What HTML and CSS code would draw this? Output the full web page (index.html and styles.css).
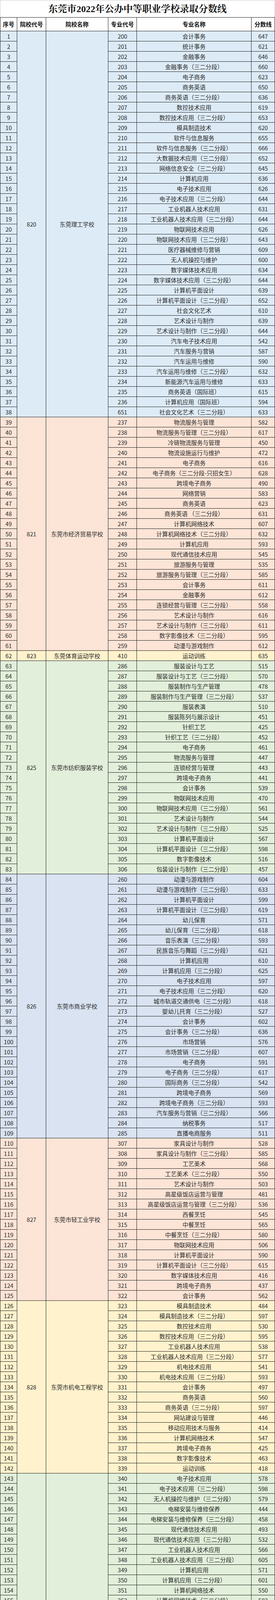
FILE: index.html
```html
<!DOCTYPE html>
<html lang="zh-CN">
<head>
<meta charset="utf-8">
<meta name="viewport" content="width=device-width, initial-scale=1">
<title>东莞市2022年公办中等职业学校录取分数线</title>
<link rel="stylesheet" href="styles.css">
</head>
<body>
<div class="sheet">
<div class="title">东莞市2022年公办中等职业学校录取分数线</div>
<table class="scores">
<colgroup><col class="c-no"><col class="c-code"><col class="c-school"><col class="c-mcode"><col class="c-major"><col class="c-score"></colgroup>
<thead><tr><th>序号</th><th>院校代号</th><th>院校名称</th><th>专业代号</th><th>专业名称</th><th>分数线</th></tr></thead>
<tbody class="g-blue">
<tr><td>1</td><td rowspan="38">820</td><td rowspan="38">东莞理工学校</td><td>200</td><td>会计事务</td><td>647</td></tr>
<tr><td>2</td><td>201</td><td>统计事务</td><td>621</td></tr>
<tr><td>3</td><td>202</td><td>金融事务</td><td>646</td></tr>
<tr><td>4</td><td>203</td><td>金融事务（三二分段）</td><td>660</td></tr>
<tr><td>5</td><td>204</td><td>电子商务</td><td>623</td></tr>
<tr><td>6</td><td>205</td><td>商务英语</td><td>650</td></tr>
<tr><td>7</td><td>206</td><td>商务英语（三二分段）</td><td>636</td></tr>
<tr><td>8</td><td>207</td><td>数控技术应用</td><td>619</td></tr>
<tr><td>9</td><td>208</td><td>数控技术应用（三二分段）</td><td>653</td></tr>
<tr><td>10</td><td>209</td><td>模具制造技术</td><td>620</td></tr>
<tr><td>11</td><td>210</td><td>软件与信息服务</td><td>655</td></tr>
<tr><td>12</td><td>211</td><td>软件与信息服务（三二分段）</td><td>666</td></tr>
<tr><td>13</td><td>212</td><td>大数据技术应用（三二分段）</td><td>652</td></tr>
<tr><td>14</td><td>213</td><td>网络信息安全（三二分段）</td><td>645</td></tr>
<tr><td>15</td><td>214</td><td>计算机应用</td><td>636</td></tr>
<tr><td>16</td><td>215</td><td>电子技术应用</td><td>626</td></tr>
<tr><td>17</td><td>216</td><td>电子技术应用（三二分段）</td><td>644</td></tr>
<tr><td>18</td><td>217</td><td>工业机器人技术应用</td><td>631</td></tr>
<tr><td>19</td><td>218</td><td>工业机器人技术应用（三二分段）</td><td>644</td></tr>
<tr><td>20</td><td>219</td><td>物联网技术应用</td><td>626</td></tr>
<tr><td>21</td><td>220</td><td>物联网技术应用（三二分段）</td><td>643</td></tr>
<tr><td>22</td><td>221</td><td>医疗器械维修与营销</td><td>609</td></tr>
<tr><td>23</td><td>222</td><td>无人机操控与维护</td><td>600</td></tr>
<tr><td>24</td><td>223</td><td>数字媒体技术应用</td><td>634</td></tr>
<tr><td>25</td><td>224</td><td>数字媒体技术应用（三二分段）</td><td>644</td></tr>
<tr><td>26</td><td>225</td><td>计算机平面设计</td><td>639</td></tr>
<tr><td>27</td><td>226</td><td>计算机平面设计（三二分段）</td><td>652</td></tr>
<tr><td>28</td><td>227</td><td>社会文化艺术</td><td>610</td></tr>
<tr><td>29</td><td>228</td><td>艺术设计与制作</td><td>639</td></tr>
<tr><td>30</td><td>229</td><td>艺术设计与制作（三二分段）</td><td>644</td></tr>
<tr><td>31</td><td>230</td><td>汽车电子技术应用</td><td>542</td></tr>
<tr><td>32</td><td>231</td><td>汽车服务与营销</td><td>587</td></tr>
<tr><td>33</td><td>232</td><td>汽车运用与维修</td><td>590</td></tr>
<tr><td>34</td><td>233</td><td>汽车运用与维修（三二分段）</td><td>632</td></tr>
<tr><td>35</td><td>234</td><td>新能源汽车运用与维修</td><td>633</td></tr>
<tr><td>36</td><td>235</td><td>商务英语（国际班）</td><td>615</td></tr>
<tr><td>37</td><td>236</td><td>计算机应用（国际班）</td><td>594</td></tr>
<tr><td>38</td><td>651</td><td>社会文化艺术（三二分段）</td><td>633</td></tr>
</tbody>
<tbody class="g-peach">
<tr><td>39</td><td rowspan="23">821</td><td rowspan="23">东莞市经济贸易学校</td><td>237</td><td>物流服务与管理</td><td>582</td></tr>
<tr><td>40</td><td>238</td><td>物流服务与管理（三二分段）</td><td>617</td></tr>
<tr><td>41</td><td>239</td><td>冷链物流服务与管理</td><td>450</td></tr>
<tr><td>42</td><td>240</td><td>物流设施运行与维护</td><td>472</td></tr>
<tr><td>43</td><td>241</td><td>电子商务</td><td>616</td></tr>
<tr><td>44</td><td>242</td><td>电子商务（三二分段-只招女生）</td><td>628</td></tr>
<tr><td>45</td><td>243</td><td>跨境电子商务</td><td>490</td></tr>
<tr><td>46</td><td>244</td><td>网络营销</td><td>583</td></tr>
<tr><td>47</td><td>245</td><td>商务英语</td><td>623</td></tr>
<tr><td>48</td><td>246</td><td>商务英语 （三二分段）</td><td>631</td></tr>
<tr><td>49</td><td>247</td><td>计算机网络技术</td><td>607</td></tr>
<tr><td>50</td><td>248</td><td>计算机网络技术（三二分段）</td><td>632</td></tr>
<tr><td>51</td><td>249</td><td>计算机应用</td><td>593</td></tr>
<tr><td>52</td><td>250</td><td>现代通信技术应用</td><td>545</td></tr>
<tr><td>53</td><td>251</td><td>旅游服务与管理</td><td>535</td></tr>
<tr><td>54</td><td>252</td><td>旅游服务与管理（三二分段）</td><td>585</td></tr>
<tr><td>55</td><td>253</td><td>会计事务</td><td>611</td></tr>
<tr><td>56</td><td>254</td><td>金融事务</td><td>612</td></tr>
<tr><td>57</td><td>255</td><td>连锁经营与管理（三二分段）</td><td>558</td></tr>
<tr><td>58</td><td>256</td><td>艺术设计与制作</td><td>616</td></tr>
<tr><td>59</td><td>257</td><td>艺术设计与制作（三二分段）</td><td>611</td></tr>
<tr><td>60</td><td>258</td><td>数字影像技术（三二分段）</td><td>595</td></tr>
<tr><td>61</td><td>259</td><td>动漫与游戏制作</td><td>612</td></tr>
</tbody>
<tbody class="g-yellow">
<tr><td>62</td><td>823</td><td>东莞体育运动学校</td><td>410</td><td>运动训练</td><td>635</td></tr>
</tbody>
<tbody class="g-green">
<tr><td>63</td><td rowspan="21">825</td><td rowspan="21">东莞市纺织服装学校</td><td>286</td><td>服装设计与工艺</td><td>515</td></tr>
<tr><td>64</td><td>287</td><td>服装设计与工艺（三二分段）</td><td>570</td></tr>
<tr><td>65</td><td>288</td><td>服装制作与生产管理</td><td>478</td></tr>
<tr><td>66</td><td>289</td><td>服装制作与生产管理（三二分段）</td><td>537</td></tr>
<tr><td>67</td><td>290</td><td>服装表演</td><td>510</td></tr>
<tr><td>68</td><td>291</td><td>服装陈列与展示设计</td><td>451</td></tr>
<tr><td>69</td><td>292</td><td>针织工艺</td><td>425</td></tr>
<tr><td>70</td><td>293</td><td>针织工艺（三二分段）</td><td>452</td></tr>
<tr><td>71</td><td>294</td><td>电子商务</td><td>461</td></tr>
<tr><td>72</td><td>295</td><td>物流服务与管理</td><td>447</td></tr>
<tr><td>73</td><td>296</td><td>连锁经营与管理</td><td>443</td></tr>
<tr><td>74</td><td>297</td><td>跨境电子商务</td><td>441</td></tr>
<tr><td>75</td><td>298</td><td>会计事务</td><td>539</td></tr>
<tr><td>76</td><td>299</td><td>物联网技术应用</td><td>470</td></tr>
<tr><td>77</td><td>300</td><td>物联网技术应用（三二分段）</td><td>561</td></tr>
<tr><td>78</td><td>301</td><td>艺术设计与制作</td><td>544</td></tr>
<tr><td>79</td><td>302</td><td>艺术设计与制作（三二分段）</td><td>525</td></tr>
<tr><td>80</td><td>303</td><td>计算机平面设计</td><td>567</td></tr>
<tr><td>81</td><td>304</td><td>计算机平面设计（三二分段）</td><td>598</td></tr>
<tr><td>82</td><td>305</td><td>数字影像技术</td><td>516</td></tr>
<tr><td>83</td><td>306</td><td>包装设计与制作（三二分段）</td><td>457</td></tr>
</tbody>
<tbody class="g-lavender">
<tr><td>84</td><td rowspan="26">826</td><td rowspan="26">东莞市商业学校</td><td>260</td><td>动漫与游戏制作</td><td>604</td></tr>
<tr><td>85</td><td>261</td><td>动漫与游戏制作（三二分段）</td><td>633</td></tr>
<tr><td>86</td><td>262</td><td>计算机平面设计</td><td>599</td></tr>
<tr><td>87</td><td>263</td><td>计算机平面设计（三二分段）</td><td>619</td></tr>
<tr><td>88</td><td>264</td><td>幼儿保育</td><td>571</td></tr>
<tr><td>89</td><td>265</td><td>幼儿保育（三二分段）</td><td>618</td></tr>
<tr><td>90</td><td>266</td><td>音乐表演（三二分段）</td><td>593</td></tr>
<tr><td>91</td><td>267</td><td>民族音乐与舞蹈（三二分段）</td><td>621</td></tr>
<tr><td>92</td><td>268</td><td>计算机应用</td><td>610</td></tr>
<tr><td>93</td><td>269</td><td>计算机应用（三二分段）</td><td>625</td></tr>
<tr><td>94</td><td>270</td><td>电子技术应用</td><td>597</td></tr>
<tr><td>95</td><td>271</td><td>电子技术应用（三二分段）</td><td>620</td></tr>
<tr><td>96</td><td>272</td><td>城市轨道交通供电（三二分段）</td><td>618</td></tr>
<tr><td>97</td><td>273</td><td>婴幼儿托育（三二分段）</td><td>527</td></tr>
<tr><td>98</td><td>274</td><td>会计事务</td><td>602</td></tr>
<tr><td>99</td><td>275</td><td>会计事务（三二分段）</td><td>636</td></tr>
<tr><td>100</td><td>276</td><td>市场营销</td><td>576</td></tr>
<tr><td>101</td><td>277</td><td>市场营销（三二分段）</td><td>607</td></tr>
<tr><td>102</td><td>278</td><td>电子商务</td><td>591</td></tr>
<tr><td>103</td><td>279</td><td>电子商务（三二分段）</td><td>617</td></tr>
<tr><td>104</td><td>280</td><td>国际商务（三二分段）</td><td>542</td></tr>
<tr><td>105</td><td>281</td><td>跨境电子商务</td><td>569</td></tr>
<tr><td>106</td><td>282</td><td>跨境电子商务（三二分段）</td><td>593</td></tr>
<tr><td>107</td><td>283</td><td>汽车服务与营销（三二分段）</td><td>566</td></tr>
<tr><td>108</td><td>284</td><td>纳税事务</td><td>517</td></tr>
<tr><td>109</td><td>285</td><td>直播电商服务</td><td>511</td></tr>
</tbody>
<tbody class="g-peach">
<tr><td>110</td><td rowspan="16">827</td><td rowspan="16">东莞市轻工业学校</td><td>307</td><td>家具设计与制作</td><td>528</td></tr>
<tr><td>111</td><td>308</td><td>家具设计与制作（三二分段）</td><td>585</td></tr>
<tr><td>112</td><td>309</td><td>工艺美术</td><td>568</td></tr>
<tr><td>113</td><td>310</td><td>工艺美术（三二分段）</td><td>550</td></tr>
<tr><td>114</td><td>311</td><td>艺术设计与制作</td><td>503</td></tr>
<tr><td>115</td><td>312</td><td>高星级饭店运营与管理</td><td>481</td></tr>
<tr><td>116</td><td>313</td><td>高星级饭店运营与管理（三二分段）</td><td>536</td></tr>
<tr><td>117</td><td>314</td><td>西餐烹饪</td><td>545</td></tr>
<tr><td>118</td><td>315</td><td>中餐烹饪</td><td>565</td></tr>
<tr><td>119</td><td>316</td><td>中餐烹饪（三二分段）</td><td>580</td></tr>
<tr><td>120</td><td>317</td><td>物联网技术应用</td><td>506</td></tr>
<tr><td>121</td><td>318</td><td>计算机平面设计</td><td>590</td></tr>
<tr><td>122</td><td>319</td><td>计算机平面设计（三二分段）</td><td>615</td></tr>
<tr><td>123</td><td>320</td><td>数字媒体技术应用</td><td>416</td></tr>
<tr><td>124</td><td>321</td><td>跨境电子商务</td><td>437</td></tr>
<tr><td>125</td><td>322</td><td>会计事务</td><td>562</td></tr>
</tbody>
<tbody class="g-yellow">
<tr><td>126</td><td rowspan="17">828</td><td rowspan="17">东莞市机电工程学校</td><td>323</td><td>模具制造技术</td><td>484</td></tr>
<tr><td>127</td><td>324</td><td>模具制造技术（三二分段）</td><td>597</td></tr>
<tr><td>128</td><td>325</td><td>数控技术应用</td><td>530</td></tr>
<tr><td>129</td><td>326</td><td>数控技术应用（三二分段）</td><td>595</td></tr>
<tr><td>130</td><td>327</td><td>工业机器人技术应用</td><td>538</td></tr>
<tr><td>131</td><td>328</td><td>工业机器人技术应用（三二分段）</td><td>577</td></tr>
<tr><td>132</td><td>329</td><td>机电技术应用</td><td>541</td></tr>
<tr><td>133</td><td>330</td><td>机电技术应用（三二分段）</td><td>593</td></tr>
<tr><td>134</td><td>331</td><td>会计事务</td><td>497</td></tr>
<tr><td>135</td><td>332</td><td>商务英语</td><td>560</td></tr>
<tr><td>136</td><td>333</td><td>商务英语（三二分段）</td><td>597</td></tr>
<tr><td>137</td><td>334</td><td>网站建设与管理</td><td>446</td></tr>
<tr><td>138</td><td>335</td><td>移动应用技术与服务</td><td>414</td></tr>
<tr><td>139</td><td>336</td><td>计算机网络技术</td><td>547</td></tr>
<tr><td>140</td><td>337</td><td>跨境电子商务</td><td>425</td></tr>
<tr><td>141</td><td>338</td><td>数字影像技术</td><td>463</td></tr>
<tr><td>142</td><td>339</td><td>运动训练</td><td>418</td></tr>
</tbody>
<tbody class="g-green">
<tr><td>143</td><td rowspan="29">829</td><td rowspan="29">东莞市电子科技学校</td><td>340</td><td>电子技术应用</td><td>578</td></tr>
<tr><td>144</td><td>341</td><td>电子技术应用（三二分段）</td><td>598</td></tr>
<tr><td>145</td><td>342</td><td>无人机操控与维护（三二分段）</td><td>579</td></tr>
<tr><td>146</td><td>343</td><td>电梯安装与维修保养</td><td>444</td></tr>
<tr><td>147</td><td>344</td><td>电梯安装与维修保养（三二分段）</td><td>458</td></tr>
<tr><td>148</td><td>345</td><td>现代通信技术应用</td><td>493</td></tr>
<tr><td>149</td><td>346</td><td>现代通信技术应用（三二分段）</td><td>532</td></tr>
<tr><td>150</td><td>347</td><td>工业机器人技术应用</td><td>566</td></tr>
<tr><td>151</td><td>348</td><td>工业机器人技术应用（三二分段）</td><td>605</td></tr>
<tr><td>152</td><td>349</td><td>计算机应用</td><td>571</td></tr>
<tr><td>153</td><td>350</td><td>计算机应用（三二分段）</td><td>601</td></tr>
<tr><td>154</td><td>351</td><td>计算机网络技术</td><td>550</td></tr>
<tr><td>155</td><td>352</td><td>计算机网络技术（三二分段）</td><td>582</td></tr>
<tr><td>156</td><td>353</td><td>软件与信息服务（三二分段）</td><td>544</td></tr>
<tr><td>157</td><td>354</td><td>电子商务</td><td>529</td></tr>
<tr><td>158</td><td>355</td><td>电子商务（三二分段）</td><td>545</td></tr>
<tr><td>159</td><td>356</td><td>会计事务</td><td>546</td></tr>
<tr><td>160</td><td>357</td><td>会计事务（三二分段）</td><td>604</td></tr>
<tr><td>161</td><td>358</td><td>会计事务（三二分段）</td><td>534</td></tr>
<tr><td>162</td><td>359</td><td>纳税事务</td><td>455</td></tr>
<tr><td>163</td><td>360</td><td>纳税事务（三二分段）</td><td>429</td></tr>
<tr><td>164</td><td>361</td><td>动漫与游戏制作</td><td>604</td></tr>
<tr><td>165</td><td>362</td><td>动漫与游戏制作（三二分段）</td><td>620</td></tr>
<tr><td>166</td><td>363</td><td>数字媒体技术应用</td><td>569</td></tr>
<tr><td>167</td><td>364</td><td>数字媒体技术应用术（三二分段）</td><td>528</td></tr>
<tr><td>168</td><td>365</td><td>社会文化艺术</td><td>537</td></tr>
<tr><td>169</td><td>366</td><td>社会文化艺术（三二分段）</td><td>554</td></tr>
<tr><td>170</td><td>367</td><td>运动训练（三二分段）</td><td>559</td></tr>
<tr><td>171</td><td>368</td><td>计算机应用(出国留学班)</td><td>499</td></tr>
</tbody>
<tbody class="g-blue">
<tr><td>172</td><td rowspan="13">830</td><td rowspan="13">东莞市电子商贸学校</td><td>369</td><td>电子商务</td><td>537</td></tr>
<tr><td>173</td><td>370</td><td>电子商务（三二分段）</td><td>600</td></tr>
<tr><td>174</td><td>371</td><td>移动商务</td><td>434</td></tr>
<tr><td>175</td><td>372</td><td>物流服务与管理</td><td>438</td></tr>
<tr><td>176</td><td>373</td><td>跨境电子商务</td><td>450</td></tr>
<tr><td>177</td><td>374</td><td>数字媒体技术应用</td><td>540</td></tr>
<tr><td>178</td><td>375</td><td>现代通信技术应用</td><td>417</td></tr>
<tr><td>179</td><td>376</td><td>会计事务</td><td>518</td></tr>
<tr><td>180</td><td>377</td><td>机械加工技术</td><td>452</td></tr>
<tr><td>181</td><td>378</td><td>工业机器人技术应用</td><td>495</td></tr>
<tr><td>182</td><td>379</td><td>汽车运用与维修</td><td>442</td></tr>
<tr><td>183</td><td>380</td><td>汽车运用与维修（三二分段）</td><td>545</td></tr>
<tr><td>184</td><td>381</td><td>新能源汽车运用与维修</td><td>461</td></tr>
</tbody>
<tbody class="g-peach">
<tr><td>185</td><td rowspan="17">833</td><td rowspan="17">东莞市信息技术学校</td><td>382</td><td>电子信息技术</td><td>470</td></tr>
<tr><td>186</td><td>383</td><td>电气设备运行与控制</td><td>420</td></tr>
<tr><td>187</td><td>384</td><td>汽车电子技术应用</td><td>460</td></tr>
<tr><td>188</td><td>385</td><td>工业机器人技术应用</td><td>501</td></tr>
<tr><td>189</td><td>386</td><td>工业机器人技术应用（三二分段）</td><td>509</td></tr>
<tr><td>190</td><td>387</td><td>电梯安装与维修保养</td><td>414</td></tr>
<tr><td>191</td><td>388</td><td>计算机应用</td><td>553</td></tr>
<tr><td>192</td><td>389</td><td>计算机应用（三二分段）</td><td>595</td></tr>
<tr><td>193</td><td>390</td><td>计算机平面设计</td><td>539</td></tr>
<tr><td>194</td><td>391</td><td>计算机平面设计（三二分段）</td><td>594</td></tr>
<tr><td>195</td><td>392</td><td>计算机网络技术</td><td>466</td></tr>
<tr><td>196</td><td>393</td><td>物联网技术应用</td><td>405</td></tr>
<tr><td>197</td><td>394</td><td>工艺美术</td><td>477</td></tr>
<tr><td>198</td><td>395</td><td>电子商务</td><td>472</td></tr>
<tr><td>199</td><td>396</td><td>电子商务（三二分段）</td><td>444</td></tr>
<tr><td>200</td><td>397</td><td>会计事务</td><td>489</td></tr>
<tr><td>201</td><td>398</td><td>物流服务与管理</td><td>401</td></tr>
</tbody>
<tbody class="g-yellow">
<tr><td>202</td><td rowspan="11">835</td><td rowspan="11">东莞市汽车技术学校</td><td>399</td><td>汽车美容与装潢</td><td>409</td></tr>
<tr><td>203</td><td>400</td><td>汽车车身修复（三二分段）</td><td>450</td></tr>
<tr><td>204</td><td>401</td><td>汽车车身修复</td><td>431</td></tr>
<tr><td>205</td><td>402</td><td>新能源汽车制造与检测</td><td>417</td></tr>
<tr><td>206</td><td>403</td><td>汽车服务与营销（三二分段）</td><td>400</td></tr>
<tr><td>207</td><td>404</td><td>汽车服务与营销</td><td>427</td></tr>
<tr><td>208</td><td>405</td><td>连锁经营与管理</td><td>455</td></tr>
<tr><td>209</td><td>406</td><td>汽车运用与维修</td><td>403</td></tr>
<tr><td>210</td><td>407</td><td>汽车电子技术应用</td><td>409</td></tr>
<tr><td>211</td><td>408</td><td>新能源汽车运用与维修</td><td>461</td></tr>
<tr><td>212</td><td>409</td><td>工业机器人技术应用</td><td>413</td></tr>
</tbody>
<tbody class="g-green">
<tr><td>213</td><td rowspan="29">840</td><td rowspan="29">东莞市技师学院</td><td>550</td><td>工业设计（中德合作班）</td><td>486</td></tr>
<tr><td>214</td><td>551</td><td>模具设计与制造（中德合作班）</td><td>506</td></tr>
<tr><td>215</td><td>552</td><td>数控加工（数控铣工）（中德合作班）</td><td>485</td></tr>
<tr><td>216</td><td>553</td><td>汽车检测与维修（中德合作班）</td><td>447</td></tr>
<tr><td>217</td><td>554</td><td>无人机应用技术</td><td>550</td></tr>
<tr><td>218</td><td>555</td><td>汽车技术服务与营销</td><td>412</td></tr>
<tr><td>219</td><td>556</td><td>健康服务与管理</td><td>510</td></tr>
<tr><td>220</td><td>557</td><td>广式面点</td><td>546</td></tr>
<tr><td>221</td><td>558</td><td>家政服务与管理</td><td>417</td></tr>
<tr><td>222</td><td>559</td><td>食品加工与检验</td><td>408</td></tr>
<tr><td>223</td><td>560</td><td>粤菜烹饪</td><td>452</td></tr>
<tr><td>224</td><td>561</td><td>国际贸易</td><td>494</td></tr>
<tr><td>225</td><td>562</td><td>服装设计与制作</td><td>522</td></tr>
<tr><td>226</td><td>563</td><td>服装设计与品牌策划</td><td>467</td></tr>
<tr><td>227</td><td>564</td><td>现代物流</td><td>424</td></tr>
<tr><td>228</td><td>565</td><td>行政管理</td><td>515</td></tr>
<tr><td>229</td><td>566</td><td>市场营销</td><td>516</td></tr>
<tr><td>230</td><td>567</td><td>饭店（酒店）服务</td><td>404</td></tr>
<tr><td>231</td><td>568</td><td>导游</td><td>462</td></tr>
<tr><td>232</td><td>569</td><td>会计</td><td>551</td></tr>
<tr><td>233</td><td>570</td><td>机电一体化技术</td><td>573</td></tr>
<tr><td>234</td><td>571</td><td>计算机广告制作</td><td>514</td></tr>
<tr><td>235</td><td>572</td><td>模具设计与制造</td><td>456</td></tr>
<tr><td>236</td><td>573</td><td>烹饪（中式烹调）</td><td>519</td></tr>
<tr><td>237</td><td>574</td><td>汽车检测与维修</td><td>473</td></tr>
<tr><td>238</td><td>575</td><td>室内设计</td><td>586</td></tr>
<tr><td>239</td><td>576</td><td>数控加工（数控铣工）</td><td>467</td></tr>
<tr><td>240</td><td>577</td><td>新媒体与互联网应用</td><td>534</td></tr>
<tr><td>241</td><td>578</td><td>新能源汽车检测与维修</td><td>554</td></tr>
</tbody>
</table>
</div>
</body>
</html>
```

FILE: styles.css
```css
html {
  -webkit-text-size-adjust: 100%;
  text-size-adjust: 100%;
}

html, body {
  margin: 0;
  padding: 0;
  background: #ffffff;
}

.sheet {
  width: 703px;
}

.title {
  height: 44px;
  box-sizing: border-box;
  border: 1px solid #c9c9c9;
  border-bottom: none;
  display: flex;
  align-items: center;
  justify-content: center;
  font-family: "Liberation Serif", "Noto Serif CJK SC", "Noto Sans CJK SC", serif;
  font-weight: 700;
  font-size: 24px;
  line-height: 30px;
  color: #111111;
}

.scores {
  width: 703px;
  table-layout: fixed;
  border-collapse: separate;
  border-spacing: 0;
  font-family: "Noto Sans CJK SC", sans-serif;
  font-size: 14.8px;
  color: #2b2b2b;
}

.c-no { width: 44px; }
.c-code { width: 74px; }
.c-school { width: 159px; }
.c-mcode { width: 73px; }
.c-major { width: 293px; }
.c-score { width: 60px; }

.scores th,
.scores td {
  box-sizing: border-box;
  padding: 0;
  border-right: 1px solid #1c1c1c;
  border-bottom: 1px solid #1c1c1c;
  text-align: center;
  vertical-align: middle;
  line-height: 18px;
  white-space: nowrap;
  overflow: hidden;
}

.scores tr > :first-child {
  border-left: 1px solid #1c1c1c;
}

.scores thead th {
  border-top: 1px solid #1c1c1c;
  background: #ffffff;
  font-weight: 700;
  font-size: 14.7px;
  color: #111111;
}

.scores thead tr {
  height: 36px;
}

.scores tbody tr {
  height: 26px;
}

.g-blue td { background: #ddebf7; }
.g-lavender td { background: #d9e3f1; }
.g-peach td { background: #fce4d6; }
.g-yellow td { background: #fff2cc; }
.g-green td { background: #e2efda; }
```
